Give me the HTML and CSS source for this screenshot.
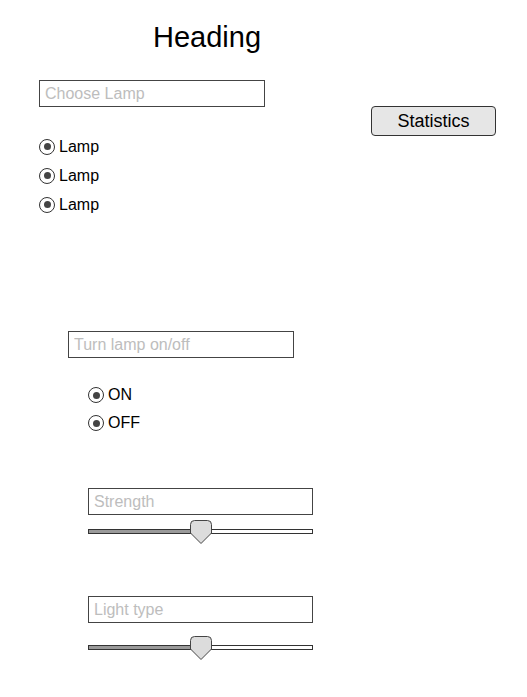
FILE: index.html
```html
<!DOCTYPE html>
<html>
<head>
<meta charset="utf-8">
<link rel="stylesheet" href="styles.css">
</head>
<body>
<h1 class="title">Heading</h1>

<section class="top">
  <div class="lamp-col">
    <input class="field" type="text" placeholder="Choose Lamp">
    <ul class="radios">
      <li class="radio"><span class="dot"></span>Lamp</li>
      <li class="radio"><span class="dot"></span>Lamp</li>
      <li class="radio"><span class="dot"></span>Lamp</li>
    </ul>
  </div>
  <button class="stats">Statistics</button>
</section>

<section class="control">
  <input class="field" type="text" placeholder="Turn lamp on/off">
  <ul class="radios onoff">
    <li class="radio"><span class="dot"></span>ON</li>
    <li class="radio"><span class="dot"></span>OFF</li>
  </ul>

  <div class="slider-group strength">
    <input class="field" type="text" placeholder="Strength">
    <div class="slider">
      <div class="track"></div>
      <svg class="thumb" width="22" height="24" viewBox="0 0 22 24"><path d="M4.5 0.5 H17.5 Q21.5 0.5 21.5 4.5 V13 L11 23.5 L0.5 13 V4.5 Q0.5 0.5 4.5 0.5 Z" fill="#dcdcdc" stroke="#444" stroke-width="1"/></svg>
    </div>
  </div>

  <div class="slider-group lighttype">
    <input class="field" type="text" placeholder="Light type">
    <div class="slider">
      <div class="track"></div>
      <svg class="thumb" width="22" height="24" viewBox="0 0 22 24"><path d="M4.5 0.5 H17.5 Q21.5 0.5 21.5 4.5 V13 L11 23.5 L0.5 13 V4.5 Q0.5 0.5 4.5 0.5 Z" fill="#dcdcdc" stroke="#444" stroke-width="1"/></svg>
    </div>
  </div>
</section>
</body>
</html>
```

FILE: styles.css
```css
* { box-sizing: border-box; }

body {
  margin: 0;
  font-family: "Liberation Sans", Arial, sans-serif;
  color: #000;
  background: #fff;
}

.title {
  margin: 0;
  padding: 22px 0 0 153px;
  font-size: 29px;
  line-height: 30px;
  font-weight: normal;
}

.top {
  display: flex;
  justify-content: space-between;
  align-items: flex-start;
  padding: 0 31px 0 39px;
  margin-top: 28px;
}

.field {
  display: block;
  width: 226px;
  height: 27px;
  margin: 0;
  padding: 0 5px;
  border: 1px solid #444;
  border-radius: 0;
  font-family: "Liberation Sans", Arial, sans-serif;
  font-size: 16px;
  color: #000;
  background: #fff;
  outline: none;
}

.field::placeholder {
  color: #bdbdbd;
}

.radios {
  list-style: none;
  margin: 25px 0 0;
  padding: 0;
}

.radio {
  display: flex;
  align-items: center;
  gap: 4px;
  height: 29px;
  font-size: 16px;
}

.dot {
  width: 16px;
  height: 16px;
  border: 1.5px solid #333;
  border-radius: 50%;
  display: flex;
  align-items: center;
  justify-content: center;
}

.dot::after {
  content: "";
  width: 7px;
  height: 7px;
  border-radius: 50%;
  background: #444;
}

.stats {
  margin-top: 26px;
  width: 125px;
  height: 30px;
  padding: 0;
  background: #e6e6e6;
  border: 1px solid #333;
  border-radius: 4px;
  font-family: "Liberation Sans", Arial, sans-serif;
  font-size: 18px;
  color: #000;
}

.control {
  margin-top: 112px;
  padding-left: 68px;
}

.onoff {
  margin: 23px 0 0 20px;
}

.onoff .radio {
  height: 28px;
}

.slider-group {
  margin-left: 20px;
  width: 225px;
}

.slider-group .field {
  width: 225px;
}

.strength {
  margin-top: 51px;
}

.lighttype {
  margin-top: 52px;
}

.slider {
  position: relative;
  height: 24px;
}

.strength .slider { margin-top: 5px; }
.lighttype .slider { margin-top: 13px; }

.track {
  position: relative;
  top: 9px;
  height: 5px;
  border: 1px solid #333;
  background: linear-gradient(to right, #9a9a9a 50%, #fff 50%);
}

.thumb {
  position: absolute;
  left: 102px;
  top: 0;
}
```
